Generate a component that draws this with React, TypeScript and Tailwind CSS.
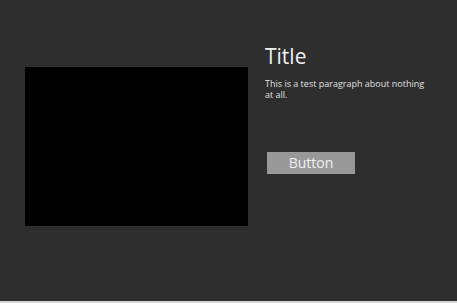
export default function App() {
    return (
        <div className="bg-[#d4d4d4] h-[303px] w-full">
            <div className="bg-[#2e2e2e] h-[301px] flex font-['Open_Sans',sans-serif]">
                <div className="ml-[25px] mt-[67px] w-[223px] h-[159px] bg-black shrink-0" />
                <div className="ml-[17px] mt-[42px] w-[165px] flex flex-col">
                    <h1 className="text-[21px] leading-[28px] text-[#f0f0f0]">Title</h1>
                    <p className="mt-[8px] text-[9px] leading-[11px] text-[#e0e0e0]">
                        This is a test paragraph about nothing at all.
                    </p>
                    <button className="mt-[52px] ml-[2px] w-[88px] h-[22px] bg-[#999999] text-[14px] leading-none text-[#f0f0f0]">
                        Button
                    </button>
                </div>
            </div>
        </div>
    );
}
